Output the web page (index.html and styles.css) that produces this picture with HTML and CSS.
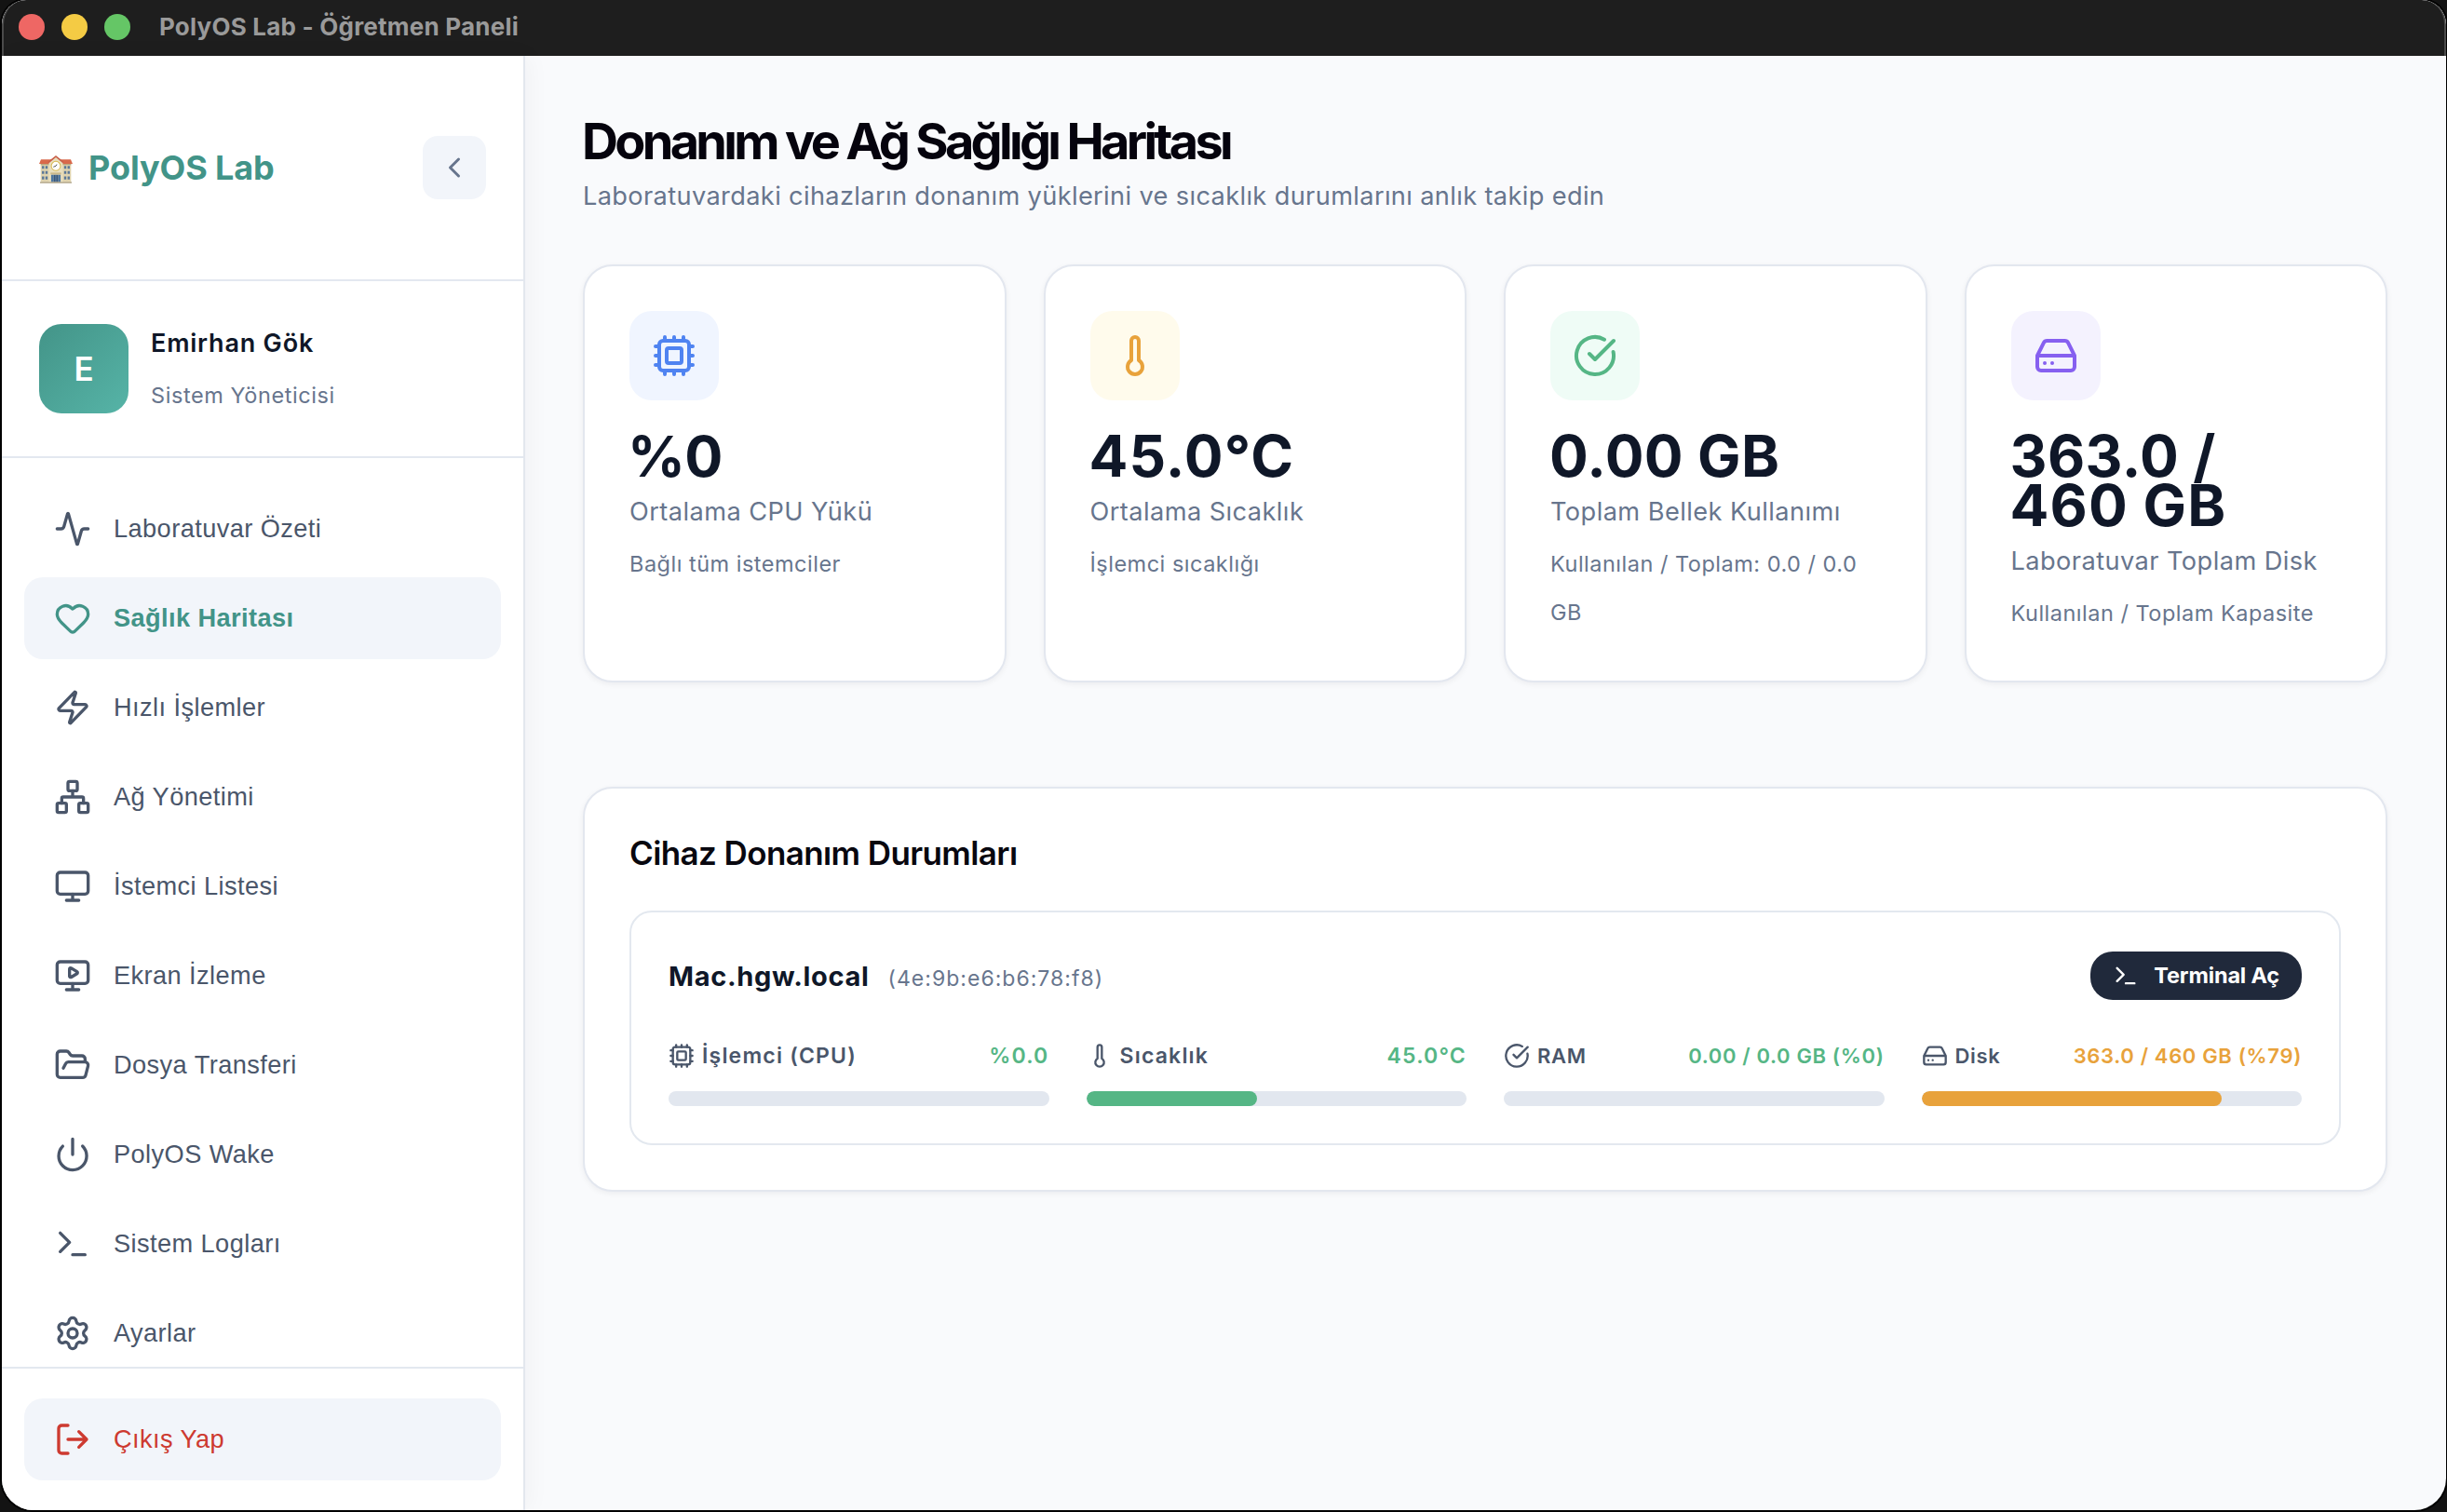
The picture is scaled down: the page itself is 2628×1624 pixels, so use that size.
FILE: index.html
```html
<!DOCTYPE html>
<html lang="tr">
<head>
<meta charset="utf-8">
<title>PolyOS Lab - Öğretmen Paneli</title>
<link rel="stylesheet" href="styles.css">
</head>
<body>
<svg class="sprite" aria-hidden="true">
  <symbol id="activity" viewBox="0 0 24 24"><path d="M22 12h-2.48a2 2 0 0 0-1.93 1.46l-2.35 8.36a.25.25 0 0 1-.48 0L9.24 2.18a.25.25 0 0 0-.48 0l-2.35 8.36A2 2 0 0 1 4.49 12H2"/></symbol>
  <symbol id="heart" viewBox="0 0 24 24"><path d="M2 9.5a5.5 5.5 0 0 1 9.591-3.676.56.56 0 0 0 .818 0A5.49 5.49 0 0 1 22 9.5c0 2.29-1.5 4-3 5.5l-5.492 5.313a2 2 0 0 1-3 .019L5 15c-1.5-1.5-3-3.2-3-5.5"/></symbol>
  <symbol id="zap" viewBox="0 0 24 24"><path d="M4 14a1 1 0 0 1-.78-1.63l9.9-10.2a.5.5 0 0 1 .86.46l-1.92 6.02A1 1 0 0 0 13 10h7a1 1 0 0 1 .78 1.63l-9.9 10.2a.5.5 0 0 1-.86-.46l1.92-6.02A1 1 0 0 0 11 14z"/></symbol>
  <symbol id="network" viewBox="0 0 24 24"><rect x="16" y="16" width="6" height="6" rx="1"/><rect x="2" y="16" width="6" height="6" rx="1"/><rect x="9" y="2" width="6" height="6" rx="1"/><path d="M5 16v-3a1 1 0 0 1 1-1h12a1 1 0 0 1 1 1v3M12 12V8"/></symbol>
  <symbol id="monitor" viewBox="0 0 24 24"><rect x="2" y="3" width="20" height="14" rx="2"/><path d="M8 21h8M12 17v4"/></symbol>
  <symbol id="monitor-play" viewBox="0 0 24 24"><path d="M10 7.75a.75.75 0 0 1 1.142-.638l3.664 2.249a.75.75 0 0 1 0 1.278l-3.664 2.25a.75.75 0 0 1-1.142-.64z"/><path d="M12 17v4M8 21h8"/><rect x="2" y="3" width="20" height="14" rx="2"/></symbol>
  <symbol id="folder" viewBox="0 0 24 24"><path d="m6 14 1.5-2.9A2 2 0 0 1 9.24 10H20a2 2 0 0 1 1.94 2.5l-1.54 6a2 2 0 0 1-1.95 1.5H4a2 2 0 0 1-2-2V5a2 2 0 0 1 2-2h3.9a2 2 0 0 1 1.69.9l.81 1.2a2 2 0 0 0 1.67.9H18a2 2 0 0 1 2 2v2"/></symbol>
  <symbol id="power" viewBox="0 0 24 24"><path d="M12 2v10M18.4 6.6a9 9 0 1 1-12.77.04"/></symbol>
  <symbol id="terminal" viewBox="0 0 24 24"><path d="M12 19h8M4 17l6-6-6-6"/></symbol>
  <symbol id="settings" viewBox="0 0 24 24"><path d="M9.671 4.136a2.34 2.34 0 0 1 4.659 0 2.34 2.34 0 0 0 3.319 1.915 2.34 2.34 0 0 1 2.33 4.033 2.34 2.34 0 0 0 0 3.831 2.34 2.34 0 0 1-2.33 4.033 2.34 2.34 0 0 0-3.319 1.915 2.34 2.34 0 0 1-4.659 0 2.34 2.34 0 0 0-3.32-1.915 2.34 2.34 0 0 1-2.33-4.033 2.34 2.34 0 0 0 0-3.831A2.34 2.34 0 0 1 6.35 6.051a2.34 2.34 0 0 0 3.319-1.915"/><circle cx="12" cy="12" r="3"/></symbol>
  <symbol id="logout" viewBox="0 0 24 24"><path d="m16 17 5-5-5-5M21 12H9M9 21H5a2 2 0 0 1-2-2V5a2 2 0 0 1 2-2h4"/></symbol>
  <symbol id="chevron" viewBox="0 0 24 24"><path d="m15 18-6-6 6-6"/></symbol>
  <symbol id="cpu" viewBox="0 0 24 24"><path d="M12 20v2M12 2v2M17 20v2M17 2v2M2 12h2M2 17h2M2 7h2M20 12h2M20 17h2M20 7h2M7 20v2M7 2v2"/><rect x="4" y="4" width="16" height="16" rx="2"/><rect x="8" y="8" width="8" height="8" rx="1"/></symbol>
  <symbol id="thermometer" viewBox="0 0 24 24"><path d="M14 4v10.54a4 4 0 1 1-4 0V4a2 2 0 0 1 4 0Z"/></symbol>
  <symbol id="check" viewBox="0 0 24 24"><path d="M21.801 10A10 10 0 1 1 17 3.335M9 11l3 3L22 4"/></symbol>
  <symbol id="drive" viewBox="0 0 24 24"><path d="M22 12H2M5.45 5.11 2 12v6a2 2 0 0 0 2 2h16a2 2 0 0 0 2-2v-6l-3.45-6.89A2 2 0 0 0 16.76 4H7.24a2 2 0 0 0-1.79 1.11zM6 16h.01M10 16h.01"/></symbol>
</svg>

<div class="window">
  <header class="titlebar">
    <div class="lights"><span class="light close"></span><span class="light minimize"></span><span class="light maximize"></span></div>
    <span class="window-title">PolyOS Lab - Öğretmen Paneli</span>
  </header>

  <div class="app">
    <aside class="sidebar">
      <div class="brand">
        <svg class="school" viewBox="0 0 106 88">
          <rect x="5" y="26" width="96" height="60" fill="#dfd3ae"/>
          <rect x="5" y="26" width="96" height="4" fill="#b9a57d"/>
          <path d="M6 12h94l6 14H0z" fill="#d9694b"/>
          <path d="M31 22 53 3l22 19v64H31z" fill="#e9dfbe"/>
          <path d="M28 20 53 0l25 20-3 4L53 6 31 24z" fill="#c9604a"/>
          <g fill="#5b7898"><path d="M9 33h7v9H9zM20 33h7v9h-7zM79 33h7v9h-7zM90 33h7v9h-7zM9 49h7v9H9zM20 49h7v9h-7zM79 49h7v9h-7zM90 49h7v9h-7zM9 66h7v10H9zM20 66h7v10h-7zM79 66h7v10h-7zM90 66h7v10h-7z"/></g>
          <circle cx="53" cy="33" r="14.5" fill="#fff" stroke="#d8b84e" stroke-width="3"/>
          <path d="M53 33 45 36M53 33l3-5" stroke="#444" stroke-width="2.6" fill="none"/>
          <rect x="36" y="54" width="34" height="6" fill="#cbb98a"/>
          <path d="M38 61h8v25h-8zM60 61h8v25h-8z" fill="#4d76a0"/>
          <rect x="46" y="61" width="14" height="25" fill="#38587c"/>
          <path d="M53 61v25" stroke="#9db4cb" stroke-width="1.5"/>
          <rect x="3" y="83" width="100" height="5" fill="#bdb39a"/>
        </svg>
        <span class="brand-name">PolyOS Lab</span>
        <button class="collapse"><svg class="icon"><use href="#chevron"/></svg></button>
      </div>

      <div class="user">
        <div class="avatar">E</div>
        <div>
          <div class="user-name">Emirhan Gök</div>
          <div class="user-role">Sistem Yöneticisi</div>
        </div>
      </div>

      <nav class="nav">
        <a class="item"><svg class="icon"><use href="#activity"/></svg>Laboratuvar Özeti</a>
        <a class="item active"><svg class="icon"><use href="#heart"/></svg>Sağlık Haritası</a>
        <a class="item"><svg class="icon"><use href="#zap"/></svg>Hızlı İşlemler</a>
        <a class="item"><svg class="icon"><use href="#network"/></svg>Ağ Yönetimi</a>
        <a class="item"><svg class="icon"><use href="#monitor"/></svg>İstemci Listesi</a>
        <a class="item"><svg class="icon"><use href="#monitor-play"/></svg>Ekran İzleme</a>
        <a class="item"><svg class="icon"><use href="#folder"/></svg>Dosya Transferi</a>
        <a class="item"><svg class="icon"><use href="#power"/></svg>PolyOS Wake</a>
        <a class="item"><svg class="icon"><use href="#terminal"/></svg>Sistem Logları</a>
        <a class="item"><svg class="icon"><use href="#settings"/></svg>Ayarlar</a>
      </nav>

      <div class="sidebar-footer">
        <a class="item logout"><svg class="icon"><use href="#logout"/></svg>Çıkış Yap</a>
      </div>
    </aside>

    <main class="main">
      <h1 class="page-title">Donanım ve Ağ Sağlığı Haritası</h1>
      <p class="page-subtitle">Laboratuvardaki cihazların donanım yüklerini ve sıcaklık durumlarını anlık takip edin</p>

      <section class="cards">
        <article class="card">
          <div class="badge blue"><svg class="icon"><use href="#cpu"/></svg></div>
          <div class="value value-percent">%0</div>
          <div class="label">Ortalama CPU Yükü</div>
          <div class="hint">Bağlı tüm istemciler</div>
        </article>
        <article class="card">
          <div class="badge amber"><svg class="icon"><use href="#thermometer"/></svg></div>
          <div class="value">45.0°C</div>
          <div class="label">Ortalama Sıcaklık</div>
          <div class="hint">İşlemci sıcaklığı</div>
        </article>
        <article class="card">
          <div class="badge green"><svg class="icon"><use href="#check"/></svg></div>
          <div class="value value-memory">0.00 GB</div>
          <div class="label">Toplam Bellek Kullanımı</div>
          <div class="hint">Kullanılan / Toplam: 0.0 / 0.0 GB</div>
        </article>
        <article class="card">
          <div class="badge violet"><svg class="icon"><use href="#drive"/></svg></div>
          <div class="value"><span class="value-used">363.0 /</span><br>460 GB</div>
          <div class="label">Laboratuvar Toplam Disk</div>
          <div class="hint">Kullanılan / Toplam Kapasite</div>
        </article>
      </section>

      <section class="panel">
        <h2 class="panel-title">Cihaz Donanım Durumları</h2>
        <div class="device">
          <div class="device-head">
            <div class="device-id"><span class="host">Mac.hgw.local</span><span class="mac">(4e:9b:e6:b6:78:f8)</span></div>
            <button class="terminal"><svg class="icon"><use href="#terminal"/></svg>Terminal Aç</button>
          </div>
          <div class="meters">
            <div class="meter">
              <div class="meter-head"><svg class="icon"><use href="#cpu"/></svg><span>İşlemci (CPU)</span><b class="ok">%0.0</b></div>
              <div class="track"></div>
            </div>
            <div class="meter">
              <div class="meter-head"><svg class="icon"><use href="#thermometer"/></svg><span>Sıcaklık</span><b class="ok">45.0°C</b></div>
              <div class="track"><div class="fill fill-ok" style="width:45%"></div></div>
            </div>
            <div class="meter small">
              <div class="meter-head"><svg class="icon"><use href="#check"/></svg><span>RAM</span><b class="ok">0.00 / 0.0 GB (%0)</b></div>
              <div class="track"></div>
            </div>
            <div class="meter small">
              <div class="meter-head"><svg class="icon"><use href="#drive"/></svg><span>Disk</span><b class="warn">363.0 / 460 GB (%79)</b></div>
              <div class="track"><div class="fill fill-warn" style="width:79%"></div></div>
            </div>
          </div>
        </div>
      </section>
    </main>
  </div>
</div>
</body>
</html>
```
FILE: styles.css
```css
* { box-sizing: border-box; margin: 0; padding: 0; }

body {
  height: 1624px;
  background: #131313;
  font-family: "Inter", "Liberation Sans", sans-serif;
  color: #0f1728;
  overflow: hidden;
}

.sprite { position: absolute; width: 0; height: 0; }

.icon {
  flex: none;
  fill: none;
  stroke: currentColor;
  stroke-width: 2;
  stroke-linecap: round;
  stroke-linejoin: round;
}

button { border: 0; font: inherit; }

/* Window frame */
.window {
  display: flex;
  flex-direction: column;
  height: 1622px;
  margin: 0 1px 2px 2px;
  border-radius: 26px 26px 34px 34px;
  overflow: hidden;
  background: #f9fafc;
  box-shadow: 0 0 0 2px #000;
}

.titlebar {
  flex: none;
  display: flex;
  align-items: center;
  gap: 31px;
  height: 60px;
  padding: 0 18px 3px 16px;
  background: #1e1e1e;
  border: 2px solid #4b4b4b;
  border-width: 0 2px;
  border-radius: 26px 26px 0 0;
}

.lights { display: flex; gap: 18px; }
.light { width: 28px; height: 28px; border-radius: 50%; }
.close { background: #ee6764; }
.minimize { background: #f4cb44; }
.maximize { background: #65c666; }

.window-title {
  font-size: 26px;
  font-weight: 700;
  letter-spacing: 0.22px;
  color: #9a9a9a;
}

.app { flex: 1; display: flex; min-height: 0; }

/* Sidebar */
.sidebar {
  flex: none;
  position: relative;
  display: flex;
  flex-direction: column;
  width: 562px;
  background: #fff;
  border-right: 2px solid #e3e7ee;
  box-shadow: 4px 0 24px rgba(15, 23, 42, 0.04);
}

.brand {
  flex: none;
  display: flex;
  align-items: center;
  height: 242px;
  padding: 0 40px;
  border-bottom: 2px solid #e3e8f0;
}
.school { width: 36px; height: 30px; margin: 4px 17px 0 0; }
.brand-name { font-size: 36px; font-weight: 700; letter-spacing: -0.1px; color: #429488; }
.collapse {
  display: grid;
  place-items: center;
  width: 68px;
  height: 68px;
  margin-left: auto;
  border-radius: 16px;
  background: #f2f5fa;
  color: #67758d;
}
.collapse .icon { width: 36px; height: 36px; }

.user {
  flex: none;
  display: flex;
  align-items: center;
  gap: 24px;
  height: 190px;
  padding: 0 40px;
  border-bottom: 2px solid #e3e8f0;
}
.avatar {
  display: grid;
  place-items: center;
  width: 96px;
  height: 96px;
  border-radius: 24px;
  background: linear-gradient(135deg, #439488, #56b4a7);
  color: #fff;
  font-size: 35px;
  font-weight: 600;
}
.user-name { padding-top: 1px; line-height: 56px; font-size: 27px; font-weight: 600; letter-spacing: 0.8px; }
.user-role { line-height: 56px; font-size: 23.5px; letter-spacing: 0.58px; color: #67758d; }

.nav {
  flex: 1;
  display: flex;
  flex-direction: column;
  gap: 8px;
  min-height: 0;
  padding: 32px 24px 0;
  overflow: hidden;
}
.item {
  flex: none;
  display: flex;
  align-items: center;
  gap: 24px;
  height: 88px;
  padding: 0 32px;
  border-radius: 20px;
  font-family: "Liberation Sans", Arial, sans-serif;
  font-size: 27.2px;
  letter-spacing: 0.42px;
  color: #4a566a;
}
.item .icon { width: 40px; height: 40px; }
.item.active { background: #f2f5fa; color: #429488; font-weight: 700; letter-spacing: 0.41px; }

.sidebar-footer {
  flex: none;
  height: 154px;
  padding: 32px 24px;
  border-top: 2px solid #e3e8f0;
}
.item.logout { background: #f2f5fa; color: #cd3a30; }

/* Main column */
.main { flex: 1; min-width: 0; padding: 65px 63px 0 62px; }

.page-title {
  line-height: 54px;
  margin: 0 0 6px -1px;
  font-size: 54px;
  font-weight: 700;
  letter-spacing: -3.68px;
  color: #05030d;
}
.page-subtitle {
  line-height: 52px;
  margin-bottom: 47px;
  font-size: 27.2px;
  letter-spacing: 0.36px;
  color: #67758d;
}

.cards { display: grid; grid-template-columns: repeat(4, 1fr); gap: 40px; }
.card, .panel {
  border: 2px solid #e3e7ef;
  border-radius: 32px;
  background: #fff;
  box-shadow: 0 2px 6px rgba(15, 23, 42, 0.06);
}
.card { padding: 48px 48px 46px; }

.badge {
  display: grid;
  place-items: center;
  width: 96px;
  height: 96px;
  margin-bottom: 34px;
  border-radius: 24px;
}
.badge .icon { width: 48px; height: 48px; }
.blue { background: #f0f5ff; color: #4f83f1; }
.amber { background: #fffbec; color: #e8a23b; }
.green { background: #effcf6; color: #55b685; }
.violet { background: #f4f2fe; color: #8660f0; }

.value { margin-left: -1px; line-height: 52.6px; font-size: 62px; font-weight: 700; letter-spacing: 1.1px; }
.value-percent { margin-left: -2px; font-size: 61px; letter-spacing: -0.6px; }
.value-memory { letter-spacing: 0.38px; }
.value-used { letter-spacing: 0.4px; }
.label { margin-top: 7.4px; line-height: 51.6px; font-size: 27.2px; letter-spacing: 0.43px; color: #67758d; white-space: nowrap; }
.hint { margin-top: 4.6px; line-height: 52px; font-size: 23.5px; letter-spacing: 0.5px; color: #67758d; }

/* Device panel */
.panel { margin-top: 112px; padding: 48px; }
.panel-title {
  line-height: 43px;
  margin-bottom: 40px;
  font-size: 35px;
  font-weight: 600;
  letter-spacing: -0.6px;
  color: #08070f;
}
.device { padding: 40px; border: 2px solid #e3e8ef; border-radius: 24px; }
.device-head { display: flex; align-items: center; justify-content: space-between; height: 56px; margin-bottom: 32px; }
.device-id { display: flex; align-items: baseline; gap: 20px; padding-top: 1px; }
.host { font-size: 29px; font-weight: 700; letter-spacing: 0.67px; }
.mac { font-size: 23px; letter-spacing: 1.02px; color: #67758d; }
.terminal {
  display: flex;
  align-items: center;
  gap: 16px;
  height: 52px;
  padding: 0 24px;
  border-radius: 24px;
  background: #20293b;
  color: #fff;
  font-size: 23.5px;
  font-weight: 700;
  letter-spacing: -0.16px;
}
.terminal .icon { width: 28px; height: 28px; }

.meters { display: grid; grid-template-columns: repeat(4, 1fr); gap: 40px; }
.meter-head {
  display: flex;
  align-items: center;
  gap: 8px;
  height: 52px;
  margin-bottom: 12px;
  font-size: 23px;
  font-weight: 600;
  letter-spacing: 1.2px;
  white-space: nowrap;
  color: #4a566a;
}
.meter-head .icon { width: 28px; height: 28px; }
.meter-head b { margin-left: auto; font-weight: 600; }
.small .meter-head { font-size: 22px; letter-spacing: 0.65px; }
.ok { color: #55b685; }
.warn { color: #e8a23b; }
.track { height: 16px; border-radius: 8px; background: #e2e7ef; overflow: hidden; }
.fill { height: 100%; border-radius: 8px; }
.fill-ok { background: #55b685; }
.fill-warn { background: #e8a23b; }
```
